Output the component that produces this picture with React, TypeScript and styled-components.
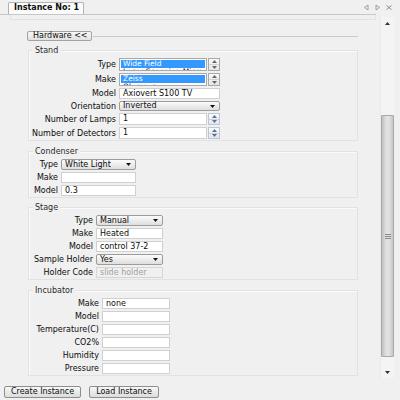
import styled, { createGlobalStyle } from "styled-components";

const GlobalStyle = createGlobalStyle`
  html, body {
    margin: 0;
    padding: 0;
    background: #f0f0f0;
  }
  body {
    font-family: "DejaVu Sans", Verdana, sans-serif;
    font-size: 8px;
    color: #0c0c0c;
  }
  * {
    box-sizing: border-box;
  }
`;

const Window = styled.div`
  width: 400px;
  height: 400px;
  overflow: hidden;
  display: flex;
  flex-direction: column;
  background: #f0f0f0;
  position: relative;
`;

const TabBar = styled.div`
  height: 15px;
  width: 376px;
  border-bottom: 1px solid #c6c6c6;
  display: flex;
  align-items: flex-end;
  padding-left: 8px;
`;

const Tab = styled.div`
  height: 12px;
  padding: 0 4px 0 5px;
  border: 1px solid #b3b3b3;
  border-bottom: none;
  border-radius: 2px 2px 0 0;
  background: #fbfbfb;
  font-weight: bold;
  line-height: 10px;
  white-space: nowrap;
`;

const TabNav = styled.div`
  position: absolute;
  top: 5px;
  right: 8px;
  display: flex;
  gap: 6px;
  align-items: center;
`;

const Body = styled.div`
  display: flex;
  height: 363px;
`;

const LeftColumn = styled.div`
  width: 376px;
  display: flex;
  flex-direction: column;
`;

const PaneStrip = styled.div`
  height: 5px;
  margin-left: 10px;
  border: 1px solid #e2e2e2;
  border-top: none;
`;

const ScrollContent = styled.div`
  flex: 1;
  overflow: hidden;
  padding: 11px 0 0 27px;
  display: flex;
  flex-direction: column;
`;

const HeaderRow = styled.div`
  display: flex;
  align-items: center;
  height: 10px;
`;

const ToggleButton = styled.div`
  width: 65px;
  height: 10px;
  border: 1px solid #a3a3a3;
  border-radius: 2px;
  background: linear-gradient(#f7f7f7, #e2e2e2);
  line-height: 8px;
  padding-left: 5px;
  white-space: nowrap;
`;

const Rule = styled.div`
  width: 265px;
  height: 1px;
  margin-left: 1px;
  background: #c9c9c9;
`;

const Group = styled.div<{ $top: number }>`
  position: relative;
  width: 330px;
  margin: ${(p) => p.$top}px 0 0 1px;
  border: 1px solid #dfe3e7;
  box-shadow: inset 1px 1px 0 #fafafa;
  padding: 7px 0 1px 0;
`;

const GroupTitle = styled.span`
  position: absolute;
  top: -5px;
  left: 4px;
  padding: 0 2px;
  background: #f0f0f0;
  line-height: 9px;
  color: #2a2a2a;
`;

const FormGrid = styled.div<{ $label: number; $field: number; $gap: number }>`
  display: grid;
  grid-template-columns: ${(p) => p.$label}px ${(p) => p.$field}px;
  column-gap: 3px;
  row-gap: ${(p) => p.$gap}px;
  align-items: center;
`;

const Label = styled.span`
  text-align: right;
  white-space: nowrap;
  line-height: 9px;
`;

const TextBox = styled.div<{ $h: number; $w?: number; $disabled?: boolean }>`
  height: ${(p) => p.$h}px;
  width: ${(p) => (p.$w ? `${p.$w}px` : "auto")};
  border: 1px solid ${(p) => (p.$disabled ? "#d6d6d6" : "#d0d0d0")};
  background: ${(p) => (p.$disabled ? "#f0f0f0" : "#ffffff")};
  color: ${(p) => (p.$disabled ? "#a0a0a0" : "#0c0c0c")};
  padding-left: 3px;
  line-height: ${(p) => p.$h - 2}px;
  white-space: nowrap;
  overflow: hidden;
`;

const FieldPair = styled.div`
  display: flex;
  gap: 1px;
`;

const ListBox = styled.div`
  width: 88px;
  height: 13px;
  border: 1px solid #a9a9a9;
  background: #ffffff;
  overflow: hidden;
  padding: 1px 1px 0 1px;
`;

const ListItem = styled.div<{ $selected?: boolean }>`
  height: 8px;
  line-height: 8px;
  font-size: 7.5px;
  padding-left: 2px;
  white-space: nowrap;
  background: ${(p) => (p.$selected ? "#3399ff" : "transparent")};
  color: ${(p) => (p.$selected ? "#ffffff" : "#0c0c0c")};
`;

const SpinBox = styled.div<{ $h: number; $blue?: boolean }>`
  width: 12px;
  height: ${(p) => p.$h}px;
  display: flex;
  flex-direction: column;
  border: 1px solid ${(p) => (p.$blue ? "#bcc6d6" : "#a9a9a9")};
  background: linear-gradient(#fafafa, #e6e6e6);
`;

const SpinHalf = styled.div<{ $divider?: boolean }>`
  flex: 1;
  display: flex;
  align-items: center;
  justify-content: center;
  border-bottom: ${(p) => (p.$divider ? "1px solid #cdd3dc" : "none")};
`;

const Combo = styled.div<{ $h: number }>`
  height: ${(p) => p.$h}px;
  border: 1px solid #9c9c9c;
  border-radius: 2px;
  background: linear-gradient(#fbfbfb, #dedede);
  display: flex;
  align-items: center;
  justify-content: space-between;
  padding: 0 4px 0 3px;
  line-height: 8px;
  white-space: nowrap;
`;

const CollapsedToggle = styled.div`
  width: 52px;
  height: 12px;
  flex-shrink: 0;
  margin-top: 6px;
  border: 1px solid #bdbdbd;
  border-radius: 2px;
  background: #f3f3f3;
`;

const ScrollBar = styled.div`
  width: 14px;
  height: 361px;
  margin: 2px 0 0 4px;
  background: #f4f4f4;
  border-left: 1px solid #e9e9e9;
  display: flex;
  flex-direction: column;
`;

const ScrollButton = styled.div<{ $h: number }>`
  height: ${(p) => p.$h}px;
  display: flex;
  align-items: center;
  justify-content: center;
`;

const Gutter = styled.div<{ $size?: number }>`
  height: ${(p) => (p.$size !== undefined ? `${p.$size}px` : "auto")};
  flex: ${(p) => (p.$size !== undefined ? "none" : "1")};
`;

const Thumb = styled.div<{ $size: number }>`
  height: ${(p) => p.$size}px;
  border: 1px solid #a9a9a9;
  border-radius: 1px;
  background: linear-gradient(to right, #bdbdbd, #dcdcdc 30%, #e4e4e4 60%, #c6c6c6);
  display: flex;
  align-items: center;
  justify-content: center;
`;

const Grip = styled.div`
  width: 6px;
  height: 5px;
  background: repeating-linear-gradient(#8c8c8c 0 1px, transparent 1px 2px);
`;

const Footer = styled.div`
  display: flex;
  gap: 8px;
  padding: 8px 0 0 4px;
`;

const PushButton = styled.div`
  height: 12px;
  padding: 0 6px;
  border: 1px solid #8e8e8e;
  border-radius: 2px;
  background: linear-gradient(#f8f8f8, #dcdcdc);
  line-height: 10px;
  white-space: nowrap;
`;

function Triangle({ up, color = "#111" }: { up?: boolean; color?: string }) {
  return (
    <svg width="5" height="3" viewBox="0 0 5 3">
      <polygon points={up ? "0,3 5,3 2.5,0" : "0,0 5,0 2.5,3"} fill={color} />
    </svg>
  );
}

function Spin({ h, blue }: { h: number; blue?: boolean }) {
  const c = blue ? "#5b6fa6" : "#666";
  return (
    <SpinBox $h={h} $blue={blue}>
      <SpinHalf $divider>
        <Triangle up color={c} />
      </SpinHalf>
      <SpinHalf>
        <Triangle color={c} />
      </SpinHalf>
    </SpinBox>
  );
}

function ComboBox({ value, h = 11 }: { value: string; h?: number }) {
  return (
    <Combo $h={h}>
      <span>{value}</span>
      <Triangle />
    </Combo>
  );
}

function App() {
  return (
    <Window>
      <GlobalStyle />
      <TabBar>
        <Tab>Instance No: 1</Tab>
      </TabBar>
      <TabNav>
        <svg width="5" height="5" viewBox="0 0 5 5">
          <polygon points="4,0 4,5 0.5,2.5" fill="none" stroke="#8a8a8a" strokeWidth="0.8" />
        </svg>
        <svg width="5" height="5" viewBox="0 0 5 5">
          <polygon points="1,0 1,5 4.5,2.5" fill="none" stroke="#8a8a8a" strokeWidth="0.8" />
        </svg>
        <svg width="6" height="5" viewBox="0 0 6 5">
          <path d="M0.5 0.5 L5.5 4.5 M5.5 0.5 L0.5 4.5" stroke="#8a8a8a" strokeWidth="1" />
        </svg>
      </TabNav>
      <Body>
        <LeftColumn>
          <PaneStrip />
          <ScrollContent>
            <HeaderRow>
              <ToggleButton>Hardware &lt;&lt;</ToggleButton>
              <Rule />
            </HeaderRow>

            <Group $top={9}>
              <GroupTitle>Stand</GroupTitle>
              <FormGrid $label={87} $field={101} $gap={2}>
                <Label>Type</Label>
                <FieldPair>
                  <ListBox>
                    <ListItem $selected>Wide Field</ListItem>
                    <ListItem>Laser Scanning Micro</ListItem>
                  </ListBox>
                  <Spin h={13} />
                </FieldPair>
                <Label>Make</Label>
                <FieldPair>
                  <ListBox>
                    <ListItem $selected>Zeiss</ListItem>
                    <ListItem>Olympus</ListItem>
                  </ListBox>
                  <Spin h={13} />
                </FieldPair>
                <Label>Model</Label>
                <TextBox $h={11}>Axiovert S100 TV</TextBox>
                <Label>Orientation</Label>
                <ComboBox value="Inverted" h={10} />
                <Label>Number of Lamps</Label>
                <FieldPair>
                  <TextBox $h={12} $w={88}>1</TextBox>
                  <Spin h={12} blue />
                </FieldPair>
                <Label>Number of Detectors</Label>
                <FieldPair>
                  <TextBox $h={12} $w={88}>1</TextBox>
                  <Spin h={12} blue />
                </FieldPair>
              </FormGrid>
            </Group>

            <Group $top={10}>
              <GroupTitle>Condenser</GroupTitle>
              <FormGrid $label={29} $field={75} $gap={2}>
                <Label>Type</Label>
                <ComboBox value="White Light" />
                <Label>Make</Label>
                <TextBox $h={11} />
                <Label>Model</Label>
                <TextBox $h={11}>0.3</TextBox>
              </FormGrid>
            </Group>

            <Group $top={9}>
              <GroupTitle>Stage</GroupTitle>
              <FormGrid $label={64} $field={67} $gap={2}>
                <Label>Type</Label>
                <ComboBox value="Manual" />
                <Label>Make</Label>
                <TextBox $h={11}>Heated</TextBox>
                <Label>Model</Label>
                <TextBox $h={11}>control 37-2</TextBox>
                <Label>Sample Holder</Label>
                <ComboBox value="Yes" />
                <Label>Holder Code</Label>
                <TextBox $h={11} $disabled>
                  slide holder
                </TextBox>
              </FormGrid>
            </Group>

            <Group $top={10}>
              <GroupTitle>Incubator</GroupTitle>
              <FormGrid $label={70} $field={68} $gap={2}>
                <Label>Make</Label>
                <TextBox $h={11}>none</TextBox>
                <Label>Model</Label>
                <TextBox $h={11} />
                <Label>Temperature(C)</Label>
                <TextBox $h={11} />
                <Label>CO2%</Label>
                <TextBox $h={11} />
                <Label>Humidity</Label>
                <TextBox $h={11} />
                <Label>Pressure</Label>
                <TextBox $h={11} />
              </FormGrid>
            </Group>

            <CollapsedToggle />
          </ScrollContent>
        </LeftColumn>

        <ScrollBar>
          <ScrollButton $h={12}>
            <Triangle up color="#333" />
          </ScrollButton>
          <Gutter $size={86} />
          <Thumb $size={242}>
            <Grip />
          </Thumb>
          <Gutter />
          <ScrollButton $h={11}>
            <Triangle color="#333" />
          </ScrollButton>
        </ScrollBar>
      </Body>
      <Footer>
        <PushButton>Create Instance</PushButton>
        <PushButton>Load Instance</PushButton>
      </Footer>
    </Window>
  );
}

export default App;
